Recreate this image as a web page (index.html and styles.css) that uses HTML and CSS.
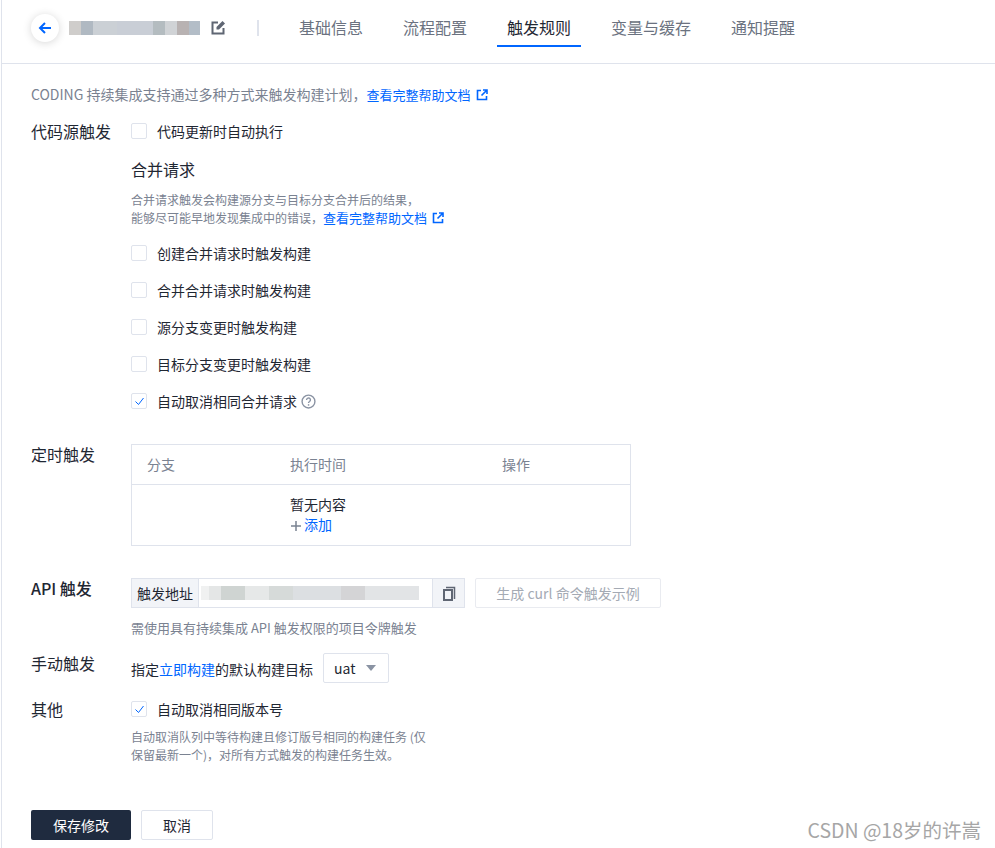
FILE: index.html
```html
<!DOCTYPE html>
<html lang="zh-CN">
<head>
    <meta charset="UTF-8">
    <title>触发规则</title>
    <link rel="stylesheet" href="styles.css">
</head>
<body>
    <div class="page">
        <header class="topbar">
            <div class="back-btn">
                <svg width="16" height="16" viewBox="0 0 16 16"><path d="M14 8H3M8 3L3 8l5 5" fill="none" stroke="#0066ff" stroke-width="2"/></svg>
            </div>
            <div class="blur-title"></div>
            <svg class="edit-icon" width="15" height="15" viewBox="0 0 15 15"><path d="M12.500 8v5.500h-11v-11H7" fill="none" stroke="#5f6673" stroke-width="2"/><path d="M5.500 9.500V7l6-6 2.500 2.500-6 6z" fill="#5f6673"/></svg>
            <div class="divider"></div>
            <nav class="tabs">
                <a class="tab">基础信息</a>
                <a class="tab">流程配置</a>
                <a class="tab active">触发规则</a>
                <a class="tab">变量与缓存</a>
                <a class="tab">通知提醒</a>
            </nav>
        </header>

        <main class="content">
            <p class="intro">CODING 持续集成支持通过多种方式来触发构建计划，<a class="link">查看完整帮助文档<svg class="ext-icon" width="12" height="12" viewBox="0 0 12 12"><path d="M5 1.500H1.500v9h9V7M7 1h4v4M11 1L5.500 6.500" fill="none" stroke="#0066ff" stroke-width="1.600"/></svg></a></p>

            <section class="row row-source">
                <div class="row-label">代码源触发</div>
                <div class="row-body">
                    <label class="check"><span class="box"></span>代码更新时自动执行</label>
                    <h3 class="sub-title">合并请求</h3>
                    <p class="desc">合并请求触发会构建源分支与目标分支合并后的结果，<br>能够尽可能早地发现集成中的错误，<a class="link">查看完整帮助文档<svg class="ext-icon" width="12" height="12" viewBox="0 0 12 12"><path d="M5 1.500H1.500v9h9V7M7 1h4v4M11 1L5.500 6.500" fill="none" stroke="#0066ff" stroke-width="1.600"/></svg></a></p>
                    <div class="check-list">
                        <label class="check"><span class="box"></span>创建合并请求时触发构建</label>
                        <label class="check"><span class="box"></span>合并合并请求时触发构建</label>
                        <label class="check"><span class="box"></span>源分支变更时触发构建</label>
                        <label class="check"><span class="box"></span>目标分支变更时触发构建</label>
                        <label class="check"><span class="box checked"><svg width="11" height="11" viewBox="0 0 11 11"><path d="M1.500 5.500l3 3 5-6.500" fill="none" stroke="#0066ff" stroke-width="1"/></svg></span>自动取消相同合并请求<svg class="help-icon" width="15" height="15" viewBox="0 0 14 14"><circle cx="7" cy="7" r="6" fill="none" stroke="#8a93a3" stroke-width="1.300"/><path d="M5.200 5.500a1.800 1.800 0 1 1 2.800 1.500c-.7.400-1 .8-1 1.500" fill="none" stroke="#8a93a3" stroke-width="1.300"/><rect x="6.400" y="9.500" width="1.300" height="1.400" fill="#8a93a3"/></svg></label>
                    </div>
                </div>
            </section>

            <section class="row row-timer">
                <div class="row-label">定时触发</div>
                <div class="row-body">
                    <div class="table">
                        <div class="table-head">
                            <span class="col-branch">分支</span>
                            <span class="col-time">执行时间</span>
                            <span>操作</span>
                        </div>
                        <div class="table-empty">
                            <div>暂无内容</div>
                            <a class="add-link"><svg width="12" height="12" viewBox="0 0 12 12"><path d="M6 1v10M1 6h10" stroke="#7a8291" stroke-width="1.500"/></svg>添加</a>
                        </div>
                    </div>
                </div>
            </section>

            <section class="row row-api">
                <div class="row-label strong">API 触发</div>
                <div class="row-body">
                    <div class="api-line">
                        <div class="input-group">
                            <span class="addon">触发地址</span>
                            <span class="url-field"><span class="blur-url"></span></span>
                            <span class="copy-btn"><svg width="14" height="15" viewBox="0 0 14 15"><path d="M4 1.500h8.500V13" fill="none" stroke="#5f6673" stroke-width="1.500"/><rect x="2" y="4" width="8" height="10" fill="none" stroke="#5f6673" stroke-width="2"/></svg></span>
                        </div>
                        <button class="btn-disabled">生成 curl 命令触发示例</button>
                    </div>
                    <p class="desc hint-api">需使用具有持续集成 API 触发权限的项目令牌触发</p>
                </div>
            </section>

            <section class="row row-manual">
                <div class="row-label">手动触发</div>
                <div class="row-body manual-line">
                    <span class="manual-text">指定<a class="link">立即构建</a>的默认构建目标</span>
                    <span class="select">uat<i class="caret"></i></span>
                </div>
            </section>

            <section class="row row-other">
                <div class="row-label">其他</div>
                <div class="row-body">
                    <label class="check"><span class="box checked"><svg width="11" height="11" viewBox="0 0 11 11"><path d="M1.500 5.500l3 3 5-6.500" fill="none" stroke="#0066ff" stroke-width="1"/></svg></span>自动取消相同版本号</label>
                    <p class="desc hint-other">自动取消队列中等待构建且修订版号相同的构建任务 (仅<br>保留最新一个)，对所有方式触发的构建任务生效。</p>
                </div>
            </section>

            <div class="actions">
                <button class="btn-primary">保存修改</button>
                <button class="btn-default">取消</button>
            </div>
        </main>
        <div class="watermark">CSDN @18岁的许嵩</div>
    </div>
</body>
</html>
```

FILE: styles.css
```css
:root {
    --line: #dfe3ec;
    --text: #1f2733;
    --muted: #7a8291;
    --blue: #0066ff;
}
html, body {
    margin: 0;
    height: 100%;
    background: #fff;
}
body {
    font-family: "Noto Sans CJK SC", "Noto Sans", sans-serif;
    font-size: 14px;
    color: var(--text);
    overflow: hidden;
}
.page {
    position: relative;
    height: 848px;
    margin-left: 1px;
    border-left: 1px solid var(--line);
    box-sizing: border-box;
}
.topbar {
    display: flex;
    align-items: center;
    height: 64px;
    padding: 0 0 8px 29px;
    box-sizing: border-box;
    border-bottom: 1px solid var(--line);
}
.back-btn {
    width: 28px;
    height: 28px;
    border-radius: 50%;
    display: flex;
    align-items: center;
    justify-content: center;
    box-shadow: 0 1px 8px rgba(0, 0, 0, 0.16);
    flex: none;
}
.blur-title {
    width: 131px;
    height: 14px;
    margin-left: 10px;
    background: linear-gradient(90deg, #cfcdcb 0 12px, #b0b9c2 12px 24px, #cbd0d5 24px 48px, #c9ced6 48px 84px, #b4bcc0 84px 96px, #d0d3d6 96px 108px, #b8b2b2 108px 120px, #b3bdc7 120px 131px);
}
.edit-icon {
    margin-left: 11px;
    flex: none;
}
.divider {
    width: 2px;
    height: 16px;
    margin-left: 31px;
    background: var(--line);
}
.tabs {
    display: flex;
    gap: 20px;
    margin-left: 30px;
    align-self: flex-start;
}
.tab {
    font-size: 16px;
    line-height: 24px;
    padding: 15px 10px 6px;
    color: #6b7280;
    border-bottom: 2px solid transparent;
}
.tab.active {
    color: var(--text);
    border-bottom-color: var(--blue);
}
.content {
    padding: 0 0 0 29px;
}
.intro {
    margin: 20px 0 0;
    line-height: 20px;
    color: var(--muted);
}
.link {
    color: var(--blue);
    font-size: 13px;
}
.ext-icon {
    margin-left: 5px;
    vertical-align: -1px;
}
.row {
    display: flex;
}
.row-label {
    width: 100px;
    flex: none;
    margin-top: -1px;
    font-size: 16px;
    line-height: 22px;
}
.row-label.strong {
    font-weight: 500;
}
.row-body {
    flex: 1;
}
.row-source {
    margin-top: 16px;
}
.check {
    display: flex;
    align-items: center;
    height: 20px;
}
.box {
    width: 16px;
    height: 16px;
    margin-right: 10px;
    border: 1px solid var(--line);
    border-radius: 2px;
    box-sizing: border-box;
    display: flex;
    align-items: center;
    justify-content: center;
    flex: none;
}
.help-icon {
    margin-left: 4px;
}
.sub-title {
    margin: 16px 0 0;
    font-size: 16px;
    font-weight: 400;
    line-height: 24px;
}
.desc {
    margin: 10px 0 0;
    font-size: 12px;
    line-height: 18px;
    color: var(--muted);
}
.check-list {
    display: flex;
    flex-direction: column;
    gap: 17px;
    margin-top: 16px;
}
.row-timer {
    margin-top: 33px;
}
.table {
    width: 500px;
    height: 102px;
    border: 1px solid var(--line);
    box-sizing: border-box;
}
.table-head {
    display: flex;
    height: 40px;
    align-items: center;
    padding: 0 0 2px 15px;
    box-sizing: border-box;
    border-bottom: 1px solid var(--line);
    color: var(--muted);
}
.col-branch {
    width: 143px;
}
.col-time {
    width: 212px;
}
.table-empty {
    padding: 9px 0 0 158px;
    line-height: 21px;
}
.add-link {
    display: block;
    margin-top: -1px;
    color: var(--blue);
}
.add-link svg {
    vertical-align: -2px;
    margin-right: 2px;
}
.row-api {
    margin-top: 32px;
}
.api-line {
    display: flex;
    gap: 10px;
}
.input-group {
    display: flex;
    width: 334px;
    height: 30px;
    border: 1px solid var(--line);
    box-sizing: border-box;
}
.addon {
    width: 67px;
    background: #f2f4f8;
    border-right: 1px solid var(--line);
    line-height: 28px;
    text-align: center;
    box-sizing: border-box;
}
.url-field {
    flex: 1;
    display: flex;
    align-items: center;
    padding-left: 2px;
}
.blur-url {
    width: 218px;
    height: 14px;
    background: linear-gradient(90deg, #f0f1f1 0 8px, #e4e6e6 8px 20px, #cfd4d2 20px 44px, #e6e8e8 44px 68px, #d6dad9 68px 92px, #dcdfe2 92px 140px, #d4d4d6 140px 164px, #e2e4e6 164px 218px);
}
.copy-btn {
    width: 31px;
    background: #f2f4f8;
    border-left: 1px solid var(--line);
    display: flex;
    align-items: center;
    justify-content: center;
}
.btn-disabled {
    width: 186px;
    height: 30px;
    border: 1px solid #e9ebf0;
    background: #fff;
    color: #a4aab4;
    font: inherit;
    border-radius: 2px;
}
.desc.hint-api {
    margin-top: 11px;
    font-size: 13px;
}
.row-manual {
    margin-top: 16px;
}
.manual-line {
    display: flex;
    align-items: center;
    gap: 10px;
    height: 30px;
}
.manual-text {
    padding-top: 2px;
}
.manual-text .link {
    font-size: 14px;
}
.select {
    width: 66px;
    height: 30px;
    border: 1px solid var(--line);
    border-radius: 2px;
    box-sizing: border-box;
    display: flex;
    align-items: center;
    justify-content: space-between;
    padding: 0 12px 0 10px;
}
.caret {
    width: 0;
    height: 0;
    border-left: 5px solid transparent;
    border-right: 5px solid transparent;
    border-top: 6px solid #8a93a3;
}
.row-other {
    margin-top: 16px;
}
.desc.hint-other {
    margin-top: 9px;
}
.actions {
    display: flex;
    gap: 10px;
    margin-top: 46px;
}
.actions button {
    height: 30px;
    font: inherit;
    border-radius: 2px;
}
.btn-primary {
    width: 100px;
    border: none;
    background: #1f2b3f;
    color: #fff;
}
.btn-default {
    width: 72px;
    border: 1px solid var(--line);
    background: #fff;
    color: var(--text);
}
.watermark {
    position: absolute;
    right: 14px;
    bottom: 5px;
    font-size: 19.500px;
    line-height: 26px;
    color: #a6a6a6;
}
```
